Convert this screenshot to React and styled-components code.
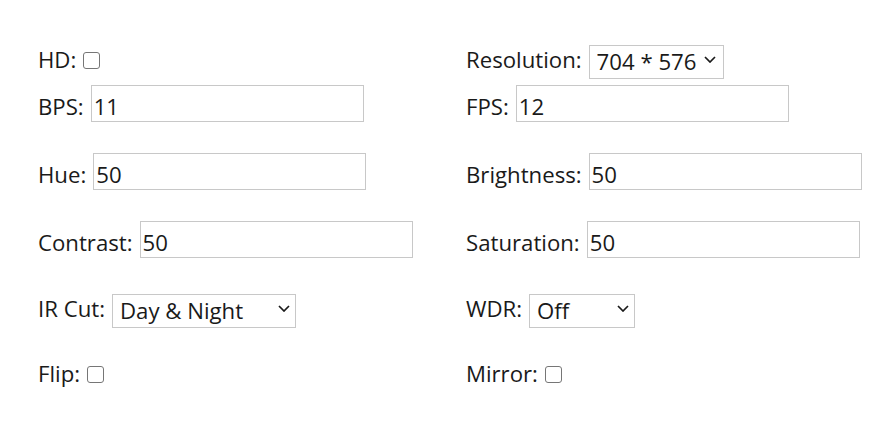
import React from 'react';
import styled, { createGlobalStyle } from 'styled-components';

const GlobalStyle = createGlobalStyle`
  body {
    margin: 0;
    background: #fff;
    font-family: "Open Sans", "Noto Sans", sans-serif;
    color: #1a1a1a;
  }
`;

const Form = styled.form`
  display: flex;
  flex-direction: column;
  padding: 40px 0 0 38px;
`;

const Row = styled.div`
  display: grid;
  grid-template-columns: 428px 428px;
  height: 37px;
  margin-top: ${p => p.$gap || 0}px;
`;

const Field = styled.label`
  display: flex;
  align-items: baseline;
  gap: 7px;
  font-size: 22.2px;
  line-height: 40px;
  white-space: nowrap;
`;

const TextInput = styled.input`
  box-sizing: border-box;
  width: 273px;
  height: 37px;
  padding: 5px 2px 0;
  border: 1px solid #c8c8c8;
  font: inherit;
  line-height: normal;
  color: #1a1a1a;
  outline: none;
`;

const Check = styled.input.attrs({ type: 'checkbox' })`
  appearance: none;
  box-sizing: border-box;
  width: 17px;
  height: 17px;
  margin: 0;
  border: 1.5px solid #767676;
  border-radius: 3px;
  background: #fff;
  align-self: center;
`;

const SelectWrap = styled.span`
  position: relative;
  display: inline-block;
  width: ${p => p.$width}px;
  height: 34px;
  margin-top: 2px;
  align-self: flex-start;
`;

const Select = styled.select`
  appearance: none;
  box-sizing: border-box;
  width: 100%;
  height: 34px;
  padding: 0 24px 0 7px;
  border: 1px solid #c8c8c8;
  border-radius: 0;
  background: #fff;
  font: inherit;
  line-height: normal;
  color: #1a1a1a;
  outline: none;
`;

const Chevron = styled.svg`
  position: absolute;
  right: ${p => p.$right}px;
  top: 14px;
  width: 12px;
  height: 7px;
  pointer-events: none;
`;

const Dropdown = ({ width, right = 7, options, value }) => (
  <SelectWrap $width={width}>
    <Select defaultValue={value}>
      {options.map(o => <option key={o}>{o}</option>)}
    </Select>
    <Chevron $right={right} viewBox="0 0 12 7">
      <path d="M1 1l5 5 5-5" fill="none" stroke="#1a1a1a" strokeWidth="1.7" />
    </Chevron>
  </SelectWrap>
);

export default function App() {
  return (
    <>
      <GlobalStyle />
      <Form>
        <Row>
          <Field>HD:<Check /></Field>
          <Field>
            Resolution:
            <Dropdown width={135} right={8} value="704 * 576" options={['704 * 576', '1280 * 720', '1920 * 1080']} />
          </Field>
        </Row>
        <Row $gap={8}>
          <Field>BPS:<TextInput defaultValue="11" /></Field>
          <Field>FPS:<TextInput defaultValue="12" /></Field>
        </Row>
        <Row $gap={31}>
          <Field>Hue:<TextInput defaultValue="50" /></Field>
          <Field>Brightness:<TextInput defaultValue="50" /></Field>
        </Row>
        <Row $gap={31}>
          <Field>Contrast:<TextInput defaultValue="50" /></Field>
          <Field>Saturation:<TextInput defaultValue="50" /></Field>
        </Row>
        <Row $gap={31}>
          <Field>IR Cut:<Dropdown width={184} right={6} value="Day & Night" options={['Day & Night', 'Day', 'Night']} /></Field>
          <Field>WDR:<Dropdown width={106} right={6} value="Off" options={['Off', 'On']} /></Field>
        </Row>
        <Row $gap={28}>
          <Field>Flip:<Check /></Field>
          <Field>Mirror:<Check /></Field>
        </Row>
      </Form>
    </>
  );
}
